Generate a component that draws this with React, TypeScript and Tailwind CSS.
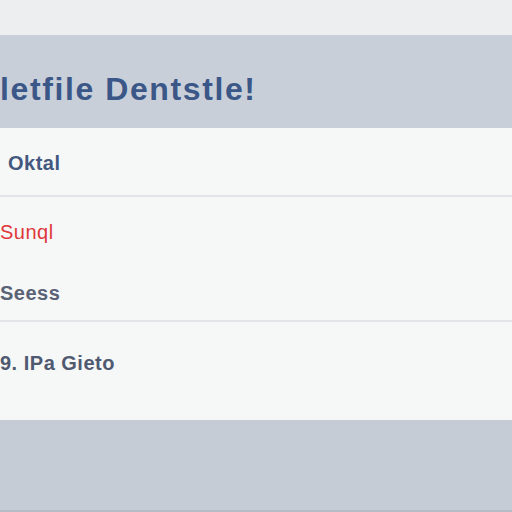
export default function App() {
  const rows = [
    { text: 'Oktal', color: 'text-[#44577e] font-bold', h: 'h-[69px]', pad: 'pl-[8px] pt-[2px]', border: true },
    { text: 'Sunql', color: 'text-[#e0383a] font-normal', h: 'h-[64px]', pad: 'pl-0 pt-[6px]', border: false },
    { text: 'Seess', color: 'text-[#5a6275] font-bold', h: 'h-[61px]', pad: 'pl-0 pt-[4px]', border: true },
    { text: '9. IPa Gieto', color: 'text-[#4f5a70] font-bold', h: 'h-[98px]', pad: 'pl-0 pb-[16px]', border: false },
  ];

  return (
    <div className="w-[512px] h-[512px] bg-[#eceef0] font-['Liberation_Sans',Arial,sans-serif] overflow-hidden flex flex-col">
      <div className="h-[35px]" />
      <div className="h-[93px] bg-[#c9cfd9] flex items-center pt-[14px]">
        <h1 className="text-[32px] font-bold tracking-[1.6px] text-[#3a5788] whitespace-nowrap">letfile Dentstle!</h1>
      </div>
      <div className="bg-[#f6f7f7] flex flex-col">
        {rows.map((r) => (
          <div
            key={r.text}
            className={`${r.h} ${r.pad} flex items-center ${r.border ? 'border-b-2 border-[#e2e5e8]' : ''}`}
          >
            <span className={`text-[20px] tracking-[0.5px] ${r.color} whitespace-nowrap`}>{r.text}</span>
          </div>
        ))}
      </div>
      <div className="flex-1 bg-[#c5ccd6] border-b-2 border-[#b4bcc8]" />
    </div>
  );
}
